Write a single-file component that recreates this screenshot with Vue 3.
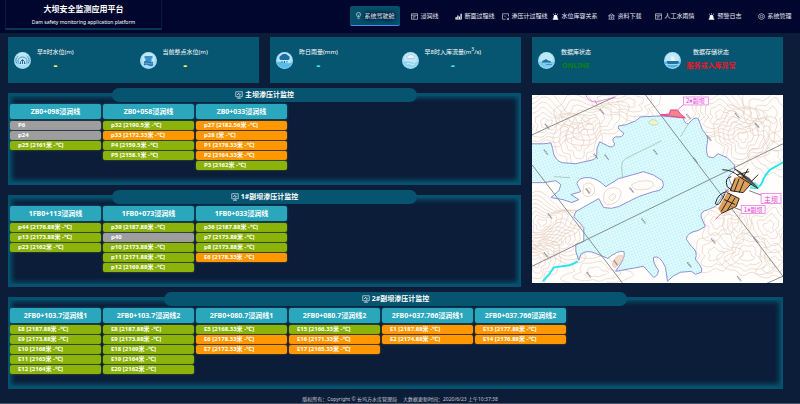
<script setup>
const navItems = [
  { label: '系统驾驶舱', icon: 'bulb', active: true },
  { label: '浸润线', icon: 'list' },
  { label: '断面过程线', icon: 'bars' },
  { label: '渗压计过程线', icon: 'frame' },
  { label: '水位库容关系', icon: 'alarm' },
  { label: '资料下载', icon: 'bank' },
  { label: '人工水雨情', icon: 'list' },
  { label: '预警日志', icon: 'alarm' },
  { label: '系统管理', icon: 'gear' },
]

const cards = [
  [
    { icon: 'gauge', label: '早8时水位(m)', value: '-', tone: 'yellow' },
    { icon: 'tower', label: '当前整点水位(m)', value: '-', tone: 'yellow' },
  ],
  [
    { icon: 'rain', label: '昨日雨量(mm)', value: '-', tone: 'cyan' },
    { icon: 'flow', label: '早8时入库流量(m', sup: '3', tail: '/s)', value: '-', tone: 'cyan' },
  ],
  [
    { icon: 'island', label: '数据库状态', value: 'ONLINE', tone: 'green' },
    { icon: 'boat', label: '数据存储状态', value: '服务或入库异常', tone: 'red' },
  ],
]

// Row state: g = normal, o = warning, n = no data
const panels = [
  {
    title: '主坝渗压计监控',
    groups: [
      { name: 'ZB0+098浸润线', rows: [['P6', 'n'], ['p24', 'n'], ['p25 [2161米 -℃]', 'g']] },
      { name: 'ZB0+058浸润线', rows: [['p32 [2190.5米 -℃]', 'g'], ['p33 [2172.33米 -℃]', 'o'], ['P4 [2159.5米 -℃]', 'g'], ['P5 [2158.1米 -℃]', 'g']] },
      { name: 'ZB0+033浸润线', rows: [['p27 [2182.56米 -℃]', 'o'], ['p28 [米 -℃]', 'o'], ['P1 [2176.33米 -℃]', 'o'], ['P2 [2164.33米 -℃]', 'o'], ['P3 [2162米 -℃]', 'g']] },
    ],
  },
  {
    title: '1#副坝渗压计监控',
    groups: [
      { name: '1FB0+113浸润线', rows: [['p44 [2176.88米 -℃]', 'g'], ['p13 [2173.88米 -℃]', 'g'], ['p23 [2162米 -℃]', 'g']] },
      { name: '1FB0+073浸润线', rows: [['p39 [2187.88米 -℃]', 'g'], ['p40', 'n'], ['p10 [2173.88米 -℃]', 'g'], ['p11 [2171.88米 -℃]', 'g'], ['p12 [2169.88米 -℃]', 'g']] },
      { name: '1FB0+033浸润线', rows: [['p36 [2187.88米 -℃]', 'g'], ['p7 [2173.88米 -℃]', 'g'], ['p8 [2173.88米 -℃]', 'g'], ['E6 [2178.33米 -℃]', 'o']] },
    ],
  },
  {
    title: '2#副坝渗压计监控',
    wide: true,
    groups: [
      { name: '2FB0+103.7浸润线1', rows: [['E8 [2187.88米 -℃]', 'g'], ['E9 [2173.88米 -℃]', 'g'], ['E10 [2168米 -℃]', 'g'], ['E11 [2163米 -℃]', 'g'], ['E12 [2164米 -℃]', 'g']] },
      { name: '2FB0+103.7浸润线2', rows: [['E8 [2187.88米 -℃]', 'g'], ['E9 [2173.88米 -℃]', 'g'], ['E18 [2169米 -℃]', 'g'], ['E19 [2164米 -℃]', 'g'], ['E20 [2162米 -℃]', 'g']] },
      { name: '2FB0+080.7浸润线1', rows: [['E5 [2168.33米 -℃]', 'g'], ['E6 [2178.33米 -℃]', 'o'], ['E7 [2172.33米 -℃]', 'o']] },
      { name: '2FB0+080.7浸润线2', rows: [['E15 [2166.33米 -℃]', 'g'], ['E16 [2171.33米 -℃]', 'o'], ['E17 [2165.33米 -℃]', 'o']] },
      { name: '2FB0+037.766浸润线1', rows: [['E1 [2187.88米 -℃]', 'o'], ['E2 [2174.88米 -℃]', 'o']] },
      { name: '2FB0+037.766浸润线2', rows: [['E13 [2177.88米 -℃]', 'o'], ['E14 [2176.88米 -℃]', 'o']] },
    ],
  },
]

// Terrain contours: each hill is a set of nested, slightly irregular rings
function ring(cx, cy, rx, ry, seed) {
  const pts = []
  for (let i = 0; i < 48; i++) {
    const a = (i / 48) * Math.PI * 2
    const k = 1 + 0.18 * Math.sin(3 * a + seed) + 0.12 * Math.sin(5 * a + seed * 2) + 0.06 * Math.sin(9 * a + seed * 3)
    pts.push(`${(cx + rx * k * Math.cos(a)).toFixed(1)} ${(cy + ry * k * Math.sin(a)).toFixed(1)}`)
  }
  return `M${pts.join('L')}Z`
}
const hills = [
  [14, 28, 34, 26, 6, 1], [58, 24, 36, 22, 5, 2.4], [46, 48, 24, 26, 4, 3.1], [96, 8, 34, 16, 4, 4.2],
  [190, 20, 36, 26, 6, 0.7], [212, 42, 30, 28, 6, 2.2], [240, 20, 26, 30, 4, 3.9], [242, 62, 20, 20, 3, 5.2],
  [10, 128, 36, 26, 8, 1.4], [26, 148, 30, 20, 6, 4.8], [4, 168, 24, 22, 5, 2.9], [64, 178, 30, 14, 3, 0.4],
  [186, 128, 20, 16, 3, 2.1], [206, 132, 14, 14, 3, 3.3], [184, 160, 22, 18, 3, 1.1], [216, 162, 24, 20, 4, 5.7],
  [238, 132, 20, 22, 4, 4.1], [244, 168, 18, 16, 3, 0.9],
]
const contours = hills.flatMap(([cx, cy, rx, ry, n, seed]) =>
  Array.from({ length: n }, (_, i) => ring(cx, cy, (rx * (n - i)) / n, (ry * (n - i)) / n, seed + i * 0.2)),
)
const water =
  'M-2 49L12 49L19 48Q21 54 22 60Q25 67 31 68L44 69L57 66Q64 65 65 61Q64 53 68 47L76 51Q82 54 83 49Q79 44 84 42Q92 43 92 38Q85 34 87 31L94 30L104 26L109 22L129 21L152 23Q153 29 157 29Q163 21 167 24L171 35Q178 42 176 48Q174 57 177 62L182 63L187 59L196 63L203 70L204 75L197 82L201 92L194 97L184 112L177 115Q168 117 170 123L174 132L167 136Q155 138 155 145L160 152Q167 157 164 165L168 170Q172 175 170 178L164 180L160 177L149 178Q141 181 136 187L134 173Q128 160 122 163Q121 168 127 176Q126 183 122 183L112 172L84 177L90 168Q94 160 92 157Q86 156 76 164L64 159Q55 155 49 160L47 166L44 157L44 150L52 147L52 133L42 122L44 117L67 104L72 113Q80 115 87 112L107 102L122 97Q135 96 131 86Q122 79 112 77L87 84L74 92Q66 84 58 83Q47 82 45 89L49 97L39 100L47 105L40 108L31 105L19 103L27 96L29 90L24 86L12 88L-2 88Z'
const ticks = [
  [13, 29], [68, 14], [12, 55], [62, 59], [73, 60], [122, 55], [98, 93], [155, 19], [176, 41], [204, 18], [224, 28],
  [162, 63], [54, 94], [16, 119], [12, 158], [110, 124], [82, 166], [55, 178], [180, 144], [156, 168], [206, 182], [223, 143],
]
</script>

<template>
  <div class="page">
    <header class="top">
      <div class="brand">
        <h1>大坝安全监测应用平台</h1>
        <p>Dam safety monitoring application platform</p>
      </div>
      <nav class="nav">
        <a v-for="item in navItems" :key="item.label" href="#" class="nav-item" :class="{ active: item.active }">
          <svg class="nav-icon" viewBox="0 0 14 14" aria-hidden="true">
            <g v-if="item.icon === 'bulb'" class="line">
              <path d="M5 10C5 8.5 2.8 7.8 2.8 5a4.2 4.2 0 0 1 8.4 0C11.200 7.800 9 8.500 9 10ZM5 12.800h4M7 10V6.500M5.500 5l1.500 1.500L8.500 5" />
            </g>
            <g v-else-if="item.icon === 'list'" class="line">
              <path d="M1 1.500h12v11H1ZM1 4.500h12M3.500 7.500h6M3.500 10h3.500" />
            </g>
            <g v-else-if="item.icon === 'bars'" class="solid">
              <path d="M1 8h2.500v4H1ZM4.500 5H7v7H4.500ZM8 7h2v5H8ZM11 1.500h2.500V12H11ZM.5 12.500h13v1H.5Z" />
            </g>
            <g v-else-if="item.icon === 'frame'" class="line">
              <path d="M7 12.500H1v-11h12V7M4 5l2 2 1.500-1.500M9 9l4 4M13 9.500V13H9.500" />
            </g>
            <g v-else-if="item.icon === 'alarm'" class="solid">
              <path d="M3 11V7.500a4 4 0 0 1 8 0V11h1.500v2.500h-11V11ZM6.500 0h1v2.500h-1ZM1.500 2l.8-.8 1.700 1.700-.8.8ZM12.500 2l-.8-.8L10 2.900l.8.8Z" />
            </g>
            <g v-else-if="item.icon === 'bank'" class="line">
              <path d="M1 5.500 7 1.500l6 4ZM2.500 6v6M11.500 6v6M1 12.500h12M7 6.500v4M5 8.800l2 2 2-2" />
            </g>
            <g v-else class="line">
              <path d="M7 .8 12.400 3.900V10.100L7 13.200 1.600 10.100V3.900Z" />
              <circle cx="7" cy="7" r="2.500" />
            </g>
          </svg>
          <span>{{ item.label }}</span>
        </a>
      </nav>
    </header>

    <main class="board">
      <section v-for="(card, c) in cards" :key="c" class="card">
        <div v-for="stat in card" :key="stat.label" class="stat">
          <svg class="stat-icon" viewBox="0 0 34 34" aria-hidden="true">
            <circle cx="17" cy="17" r="17" fill="#a5dcf5" />
            <circle cx="17" cy="14" r="13" fill="#c9ecfa" opacity=".7" />
            <g v-if="stat.icon === 'gauge'" fill="none" stroke="#4a90bd" stroke-width="2">
              <path d="M11 24a9 8 0 1 1 12 0M6 23a13 11 0 0 1 3-15M28 23A13 11 0 0 0 25 8" />
              <path d="M17 15v9M13 24v-5l4-4 4 4v5" stroke="#2c6a9d" />
            </g>
            <g v-else-if="stat.icon === 'tower'">
              <path d="M9 8h16v5H9ZM11 13h12v8H11Z" fill="#3f91c5" />
              <path d="M8 19q4-3 9 0t9 0v8q-4 3-9 0t-9 0Z" fill="#2578b4" />
              <path d="M9 23q4-2 8 0t8 0" fill="none" stroke="#b6e3f6" />
            </g>
            <g v-else-if="stat.icon === 'rain'">
              <path d="M1 21q8-3 16 0t16 0A17 17 0 0 1 1 21Z" fill="#54bdea" />
              <path d="M9 16a5 5 0 0 1 1-9 8 7 0 0 1 14 0 5 5 0 0 1 1 9Z" fill="#1e6da5" />
              <path d="M12 18v3M17 18v4M22 18v3" stroke="#1e6da5" stroke-width="2" />
            </g>
            <g v-else-if="stat.icon === 'flow'">
              <path d="M2 20q8-3 15 0t15 0A16 16 0 0 1 2 20Z" fill="#8fd2ee" />
              <path d="M11 13a4 4 0 0 1 1-6 7 5 0 0 1 11 0 4 4 0 0 1 1 6Z" fill="#e6f5fb" stroke="#8aa9b9" />
              <path d="M9 24q4-2 8 0t8 0" fill="none" stroke="#dcf3fb" stroke-width="2" />
            </g>
            <g v-else-if="stat.icon === 'island'">
              <path d="M1 20h32A17 17 0 0 1 1 20Z" fill="#7ccbee" />
              <path d="M7 21q1-5 6-5l3-2 4 3q6 0 7 4Z" fill="#21739f" />
              <path d="M16 25h12" stroke="#3b9fd0" stroke-width="2" />
            </g>
            <g v-else>
              <path d="M1 20h32A17 17 0 0 1 1 20Z" fill="#4db2e1" />
              <path d="M5 18h25l-3 6H8Z" fill="#236f9e" />
              <path d="M14 18V9h6l3 9Z" fill="#e3f4fb" />
              <path d="M3 25h28" stroke="#8fd6f2" stroke-width="2" />
            </g>
          </svg>
          <dl>
            <dt>{{ stat.label }}<sup v-if="stat.sup">{{ stat.sup }}</sup>{{ stat.tail }}</dt>
            <dd :class="stat.tone">{{ stat.value }}</dd>
          </dl>
        </div>
      </section>

      <section v-for="panel in panels" :key="panel.title" class="panel" :class="{ wide: panel.wide }">
        <h2>
          <svg viewBox="0 0 16 16" aria-hidden="true">
            <path d="M1.500 1.500h13v10h-13ZM4 14.500h8M8 11.500v3M4 7h2l1.500-3 2 5L11 6.500h1.500" />
          </svg>
          {{ panel.title }}
        </h2>
        <div class="groups">
          <div v-for="group in panel.groups" :key="group.name" class="group">
            <h3>{{ group.name }}</h3>
            <ul>
              <li v-for="[text, state] in group.rows" :key="text" :class="state">{{ text }}</li>
            </ul>
          </div>
        </div>
      </section>

      <figure class="map">
        <svg viewBox="0 0 252 189" role="img" aria-label="库区地形图">
          <defs>
            <pattern id="dots" width="4" height="4" patternUnits="userSpaceOnUse" patternTransform="rotate(24)">
              <rect width="4" height="4" fill="#e0fdff" />
              <path d="M0 1h1.500M2 3h1.500" stroke="#98dce8" stroke-width=".8" />
            </pattern>
          </defs>
          <rect width="252" height="189" fill="#fffefd" />
          <path v-for="(d, i) in contours" :key="i" :d="d" fill="none" stroke="#e3c8b4" stroke-width=".6" />
          <path :d="water" fill="url(#dots)" stroke="#8c90d6" stroke-width="1" />
          <g fill="#fffefd" stroke="#e0bfa8" stroke-width=".6">
            <path d="M52 90q7-4 10 2t-3 9-8-3ZM55 94q3-2 4 1t-2 3Z" />
            <path d="M72 100q3-8 11-7t6 8-10 9-7-10ZM77 103q3-5 6-3t-3 6Z" />
            <path d="M100 90q6-4 14-4t8 4-11 5-11-5Z" />
            <path d="M81 170q2-9 8-9t-1 8-7 1Z" fill="#f3dccb" />
          </g>
          <path d="M117 27q4-4 8-1t-1 4-7-3Z" fill="#eff4cf" stroke="#b6ca90" stroke-width=".6" />
          <path d="M91 84L90 72Q90 66 94 64L130 46M22 82l16 1M149 42l8-13" fill="none" stroke="#a7bcae" stroke-width=".8" />
          <g fill="none" stroke="#7f8282" stroke-width=".9">
            <path d="M0 40L83 2M114 0L186 95L252 182M0 70L91 189M0 172L252 49M236 189L252 182" />
          </g>
          <path
            v-for="([x, y], i) in ticks"
            :key="`t${i}`"
            :d="`M${x} ${y}l4 5`"
            stroke="#74767a"
            stroke-width="1.6"
            stroke-dasharray="1.4 .5"
            opacity=".75"
          />
          <path d="M253 67L239 75Q233 81 231 88Q228 95 219 93M46 167L38 171L22 173Q18 180 11 187" fill="none" stroke="#28e7ea" stroke-width="2" />
          <path d="M54 0q2 6 10 7l20-5M63 5l3 6" fill="none" stroke="#e77bd8" stroke-width=".8" />
          <path d="M129 20L138 19 139 15H146L149 19 154 23Z" fill="#f1858d" stroke="#ee3d8e" />
          <path d="M146 15l7-6" stroke="#ef55dd" stroke-width=".8" />
          <path d="M218 90l6-3 5 5-8 2Z" fill="#77f0ec" />

          <path d="M203 83L211 81 220 89 212 98 199 96Z" fill="#dba05c" />
          <path d="M196 98L208 104 205 112 190 119 187 114Z" fill="#dba05c" />
          <path d="M204 75L216 86 228 94 218 83Z" fill="#55504c" />
          <g class="dam">
            <path d="M191 75Q201 75 208 82L227 94M200 82Q193 83 196 92L201 96M203 74Q211 77 215 84M217 74L211 84M227 80L220 87M206 80L218 77" />
            <path d="M204 84L199 96 212 98 220 89M208 84L203 97M213 86L208 98" />
            <path d="M196 97Q187 98 184 109Q187 112 190 106L194 99M196 98L208 104 205 112 190 119M200 100L190 117M204 103L196 116M193 105L204 110" />
          </g>
          <path d="M218 96L231 101M200 112L211 116" stroke="#6b5762" stroke-width=".8" />
          <path d="M190 119L184 125M194 95l4 2" stroke="#e24747" stroke-width=".8" />
          <g class="tags">
            <rect x="152" y="2" width="25" height="8" />
            <text x="164" y="8">2#副坝</text>
            <rect x="230" y="99" width="20" height="10" />
            <text x="240" y="107" class="big">主坝</text>
            <rect x="210" y="111" width="24" height="8" />
            <text x="222" y="117">1#副坝</text>
          </g>
        </svg>
      </figure>
    </main>

    <footer class="foot">
      <span>版权所有：Copyright © 长坞方水库管理局</span>
      <span>大数据更新时间：2020/6/23 上午10:37:38</span>
    </footer>
  </div>
</template>

<style>
body {
  margin: 0;
  background: #0b1d38;
}
</style>

<style scoped>
.page {
  color: #fff;
  font-family: "Noto Sans", "Noto Sans CJK SC", sans-serif;
  font-size: 6px;
  line-height: 8px;
  border-bottom: 1px solid #4b5563;
}
h1, h2, h3, p, ul, dl, dd, figure {
  margin: 0;
  padding: 0;
}
.top {
  display: flex;
  align-items: flex-start;
  justify-content: space-between;
  height: 33px;
  background: #01062e;
}
.brand {
  box-sizing: border-box;
  width: 157px;
  height: 30px;
  margin-left: 5px;
  padding-top: 3px;
  border: 1px solid #0a1a3c;
  border-width: 0 1px 2px;
  border-bottom-color: #073953;
  text-align: center;
}
.brand h1 {
  font-size: 8px;
  line-height: 12px;
  font-weight: 700;
}
.brand p {
  font-size: 5px;
  line-height: 14px;
}
.nav {
  display: flex;
  padding-top: 6px;
}
.nav-item {
  display: flex;
  box-sizing: border-box;
  align-items: center;
  justify-content: center;
  gap: 2px;
  width: 50px;
  height: 20px;
  color: #e8eaf2;
  text-decoration: none;
  white-space: nowrap;
}
.nav-item.active {
  border-bottom: 1px solid #4a8af0;
  border-radius: 2px;
  background: #06506c;
  text-shadow: 0 0 4px #010a28, 0 0 4px #010a28, 0 0 4px #010a28;
}
.nav-icon {
  flex: none;
  width: 7px;
  height: 7px;
}
.line {
  fill: none;
  stroke: #e4e7ef;
  stroke-width: 1.2;
}
.solid {
  fill: #fff;
}
.board {
  display: grid;
  grid-template-columns: repeat(3, minmax(0, 1fr));
  column-gap: 11px;
  row-gap: 5px;
  padding: 4px 17px 0 8px;
}
.card {
  display: grid;
  grid-template-columns: 1fr 1fr;
  height: 46px;
  background: #065571;
}
.stat {
  display: flex;
  align-items: center;
  gap: 6px;
  padding-left: 6px;
}
.stat-icon {
  flex: none;
  width: 17px;
  height: 17px;
}
.stat dl {
  text-align: center;
  white-space: nowrap;
}
.stat dt {
  line-height: 10px;
}
.stat sup {
  font-size: 5px;
  line-height: 0;
}
.stat dd {
  padding-top: 3px;
  padding-bottom: 1px;
  font-size: 7px;
  line-height: 12px;
  font-weight: 700;
}
.stat .yellow {
  color: #fbf75a;
  font-size: 12px;
}
.stat .cyan {
  color: #4ee0e6;
  font-size: 12px;
}
.green { color: #0a8410; }
.red { color: #f0141e; }
.panel {
  grid-column: 1 / span 2;
  margin-top: 5px;
  padding: 0 0 12px;
  border: 2px solid #06526e;
  border-width: 3px 2px 3px 2px;
  box-shadow: inset 0 0 5px 2px #06526e;
}
.panel.wide {
  grid-column: 1 / -1;
}
.panel h2 {
  display: flex;
  align-items: center;
  justify-content: center;
  gap: 2px;
  width: 60%;
  height: 14px;
  margin: -8px auto 2px;
  border-radius: 7px;
  background: #065470;
  font-size: 7px;
  font-weight: 700;
}
.panel h2 svg {
  width: 8px;
  height: 8px;
  fill: none;
  stroke: #e9f3f7;
  stroke-width: 1.3;
}
.groups {
  display: flex;
  gap: 2px;
}
.group {
  width: 91px;
}
.group h3 {
  height: 15px;
  border-radius: 2px;
  background: #2aa7bd;
  box-shadow: 0 0 3px #17667f;
  font-size: 7px;
  line-height: 15px;
  text-align: center;
  white-space: nowrap;
}
.group ul {
  display: grid;
  gap: 1px;
  padding-top: 2px;
  list-style: none;
}
.group li {
  height: 9px;
  padding-left: 8px;
  border-radius: 2px;
  font-weight: 700;
  line-height: 9px;
  white-space: nowrap;
}
.g {
  background: #8bb30a;
  box-shadow: 0 0 2px #5c7a14;
}
.o {
  background: #ff9800;
  box-shadow: 0 0 2px #8c5d14;
}
.n {
  background: #9e9e9e;
  box-shadow: 0 0 2px #5d6570;
}
.map {
  grid-column: 3;
  grid-row: 2 / span 2;
  padding-top: 7px;
}
.map svg {
  display: block;
  width: 100%;
}
.dam {
  fill: none;
  stroke: #29211c;
  stroke-width: 1;
}
.tags rect {
  fill: #fff6ff;
  stroke: #ee6ade;
  stroke-width: 0.7;
}
.tags text {
  fill: #dc43c9;
  font-family: "Noto Sans CJK SC", sans-serif;
  font-size: 6px;
  text-anchor: middle;
}
.tags .big {
  font-size: 7px;
}
.foot {
  display: flex;
  justify-content: center;
  gap: 6px;
  padding-top: 6px;
  color: #c3c9d4;
  font-size: 5px;
}
</style>
